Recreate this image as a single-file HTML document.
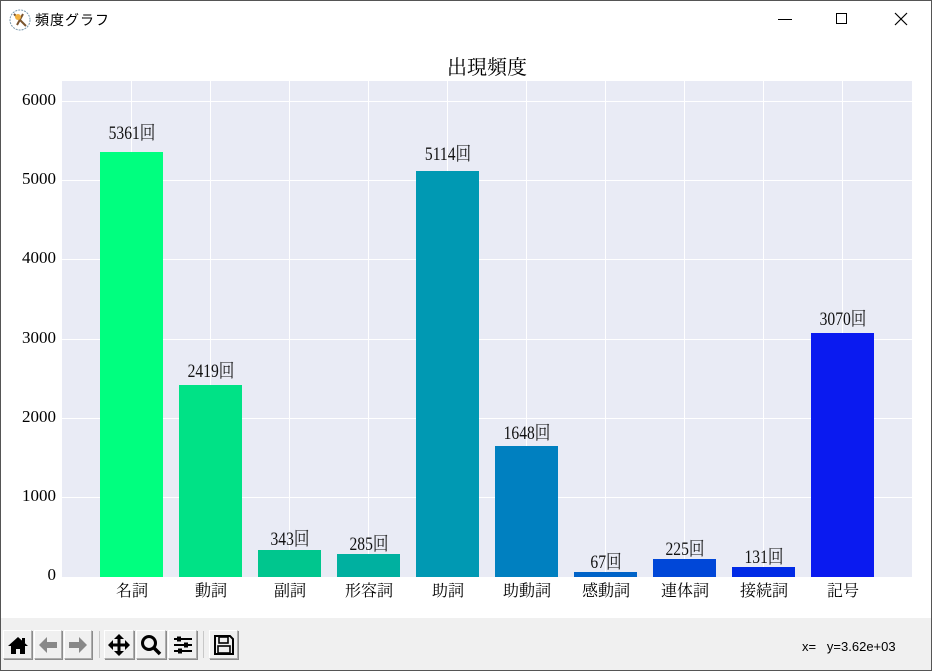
<!DOCTYPE html>
<html><head><meta charset="utf-8">
<style>
*{margin:0;padding:0;box-sizing:border-box}
body{width:932px;height:671px;overflow:hidden;background:#fff;position:relative;font-family:"Liberation Serif","Noto Serif CJK JP",serif}
.win{position:absolute;left:0;top:0;width:932px;height:671px;border:1px solid #555;}
.abs{position:absolute}
.plot{position:absolute;left:62px;top:81px;width:850px;height:496px;background:#e9ebf5;overflow:hidden}
.hg{position:absolute;left:0;width:850px;height:1px;background:#fff}
.vg{position:absolute;top:0;height:496px;width:1px;background:#fff}
.bar{position:absolute;bottom:0;width:63px}
.val{position:absolute;width:100px;text-align:center;font-size:19px;color:#111;transform:scaleX(0.82);white-space:nowrap}
.yt{position:absolute;right:876px;font-size:17px;width:60px;text-align:right}
.xt{position:absolute;top:578px;width:100px;text-align:center;font-size:16px;font-family:"Noto Serif CJK JP","Liberation Serif",serif}
.tb{position:absolute;top:618px;left:1px;width:930px;height:52px;background:#f0f0f0}
.btn{position:absolute;top:630px;height:29px;background:#f0f0f0;border:1px solid #adadad;border-top-color:#fff;border-left-color:#fff;box-shadow:1px 1px 0 #8c8c8c;display:flex;align-items:center;justify-content:center}
.sep{position:absolute;top:631px;width:1px;height:27px;background:#c8c8c8}
</style></head><body>
<div class="win"></div>
<svg class="abs" style="left:9px;top:9px" width="22" height="22" viewBox="0 0 22 22"><circle cx="11" cy="11" r="10" fill="#fff" stroke="#7a9ab0" stroke-width="1" stroke-dasharray="2 1"/><path d="M5 5 L17 17 M14 5 L8 16" stroke="#7a5530" stroke-width="2"/><circle cx="9" cy="8" r="3" fill="#f0b040"/></svg>
<div class="abs" style="left:35px;top:10px;font-size:14px;font-family:'Noto Sans CJK JP',sans-serif;letter-spacing:1px">頻度グラフ</div>
<div class="abs" style="left:778px;top:19px;width:14px;height:1px;background:#000"></div>
<div class="abs" style="left:836px;top:13px;width:11px;height:11px;border:1px solid #000"></div>
<svg class="abs" style="left:894px;top:12px" width="14" height="14"><path d="M1 1L13 13M13 1L1 13" stroke="#000" stroke-width="1.2"/></svg>
<div class="abs" style="left:0;width:974px;top:51px;text-align:center;font-size:20px;font-family:'Noto Serif CJK JP','Liberation Serif',serif">出現頻度</div>
<div class="plot">
<div class="hg" style="top:20px"></div><div class="hg" style="top:99px"></div><div class="hg" style="top:178px"></div><div class="hg" style="top:258px"></div><div class="hg" style="top:337px"></div><div class="hg" style="top:416px"></div>
<div class="vg" style="left:69px"></div><div class="vg" style="left:148px"></div><div class="vg" style="left:227px"></div><div class="vg" style="left:306px"></div><div class="vg" style="left:385px"></div><div class="vg" style="left:464px"></div><div class="vg" style="left:543px"></div><div class="vg" style="left:622px"></div><div class="vg" style="left:701px"></div><div class="vg" style="left:780px"></div>
<div class="bar" style="left:38px;height:425px;background:#00ff7f"></div>
<div class="bar" style="left:117px;height:192px;background:#00e286"></div>
<div class="bar" style="left:196px;height:27px;background:#00c68e"></div>
<div class="bar" style="left:275px;height:23px;background:#00b0a0"></div>
<div class="bar" style="left:354px;height:406px;background:#0099b3"></div>
<div class="bar" style="left:433px;height:131px;background:#0080c0"></div>
<div class="bar" style="left:512px;height:5px;background:#0063c8"></div>
<div class="bar" style="left:591px;height:18px;background:#0047d8"></div>
<div class="bar" style="left:670px;height:10px;background:#002ae6"></div>
<div class="bar" style="left:749px;height:244px;background:#0a1af0"></div>
</div>
<div class="val" style="left:82px;top:118px">5361回</div>
<div class="val" style="left:161px;top:356px">2419回</div>
<div class="val" style="left:240px;top:524px">343回</div>
<div class="val" style="left:319px;top:529px">285回</div>
<div class="val" style="left:398px;top:139px">5114回</div>
<div class="val" style="left:477px;top:418px">1648回</div>
<div class="val" style="left:556px;top:547px">67回</div>
<div class="val" style="left:635px;top:534px">225回</div>
<div class="val" style="left:714px;top:542px">131回</div>
<div class="val" style="left:793px;top:304px">3070回</div>
<div class="yt" style="top:90px">6000</div>
<div class="yt" style="top:169px">5000</div>
<div class="yt" style="top:248px">4000</div>
<div class="yt" style="top:328px">3000</div>
<div class="yt" style="top:407px">2000</div>
<div class="yt" style="top:486px">1000</div>
<div class="yt" style="top:565px">0</div>
<div class="xt" style="left:82px">名詞</div>
<div class="xt" style="left:161px">動詞</div>
<div class="xt" style="left:240px">副詞</div>
<div class="xt" style="left:319px">形容詞</div>
<div class="xt" style="left:398px">助詞</div>
<div class="xt" style="left:477px">助動詞</div>
<div class="xt" style="left:556px">感動詞</div>
<div class="xt" style="left:635px">連体詞</div>
<div class="xt" style="left:714px">接続詞</div>
<div class="xt" style="left:793px">記号</div>
<div class="tb"></div>
<div class="btn" style="left:3px;width:29px"><svg width="22" height="20" viewBox="0 0 22 20"><path d="M11 2L1 11h3v8h5v-5h4v5h5v-8h3z" fill="#000"/><rect x="15" y="3" width="3" height="5" fill="#000"/></svg></div>
<div class="btn" style="left:34px;width:28px"><svg width="22" height="20" viewBox="0 0 22 20"><path d="M10 2L2 10l8 8v-5h10V7H10z" fill="#888"/></svg></div>
<div class="btn" style="left:64px;width:28px"><svg width="22" height="20" viewBox="0 0 22 20"><path d="M12 2l8 8-8 8v-5H2V7h10z" fill="#888"/></svg></div>
<div class="sep" style="left:99px"></div>
<div class="btn" style="left:104px;width:30px"><svg width="24" height="24" viewBox="0 0 24 24"><path d="M12 1l5 5h-3.5v4.5H18V7l5 5-5 5v-3.5h-4.5V18H17l-5 5-5-5h3.5v-4.5H6V17l-5-5 5-5v3.5h4.5V6H7z" fill="#000"/></svg></div>
<div class="btn" style="left:136px;width:30px"><svg width="22" height="22" viewBox="0 0 22 22"><circle cx="9" cy="9" r="6.5" fill="none" stroke="#000" stroke-width="3"/><path d="M13.5 13.5L20 20" stroke="#000" stroke-width="3.5"/></svg></div>
<div class="btn" style="left:168px;width:29px"><svg width="22" height="22" viewBox="0 0 22 22"><path d="M2 5h18M2 11h18M2 17h18" stroke="#000" stroke-width="2"/><rect x="5" y="2.5" width="4" height="5" fill="#000"/><rect x="12" y="8.5" width="4" height="5" fill="#000"/><rect x="6" y="14.5" width="4" height="5" fill="#000"/></svg></div>
<div class="sep" style="left:203px"></div>
<div class="btn" style="left:209px;width:29px"><svg width="22" height="22" viewBox="0 0 22 22"><path d="M2 2h15l3 3v15H2z" fill="none" stroke="#000" stroke-width="2"/><rect x="6" y="3" width="9" height="6" fill="none" stroke="#000" stroke-width="1.6"/><rect x="5" y="12" width="12" height="7" fill="none" stroke="#000" stroke-width="1.6"/></svg></div>
<div class="abs" style="left:802px;top:639px;font-family:'Liberation Sans',sans-serif;font-size:13px;white-space:pre">x=   y=3.62e+03</div>
</body></html>
